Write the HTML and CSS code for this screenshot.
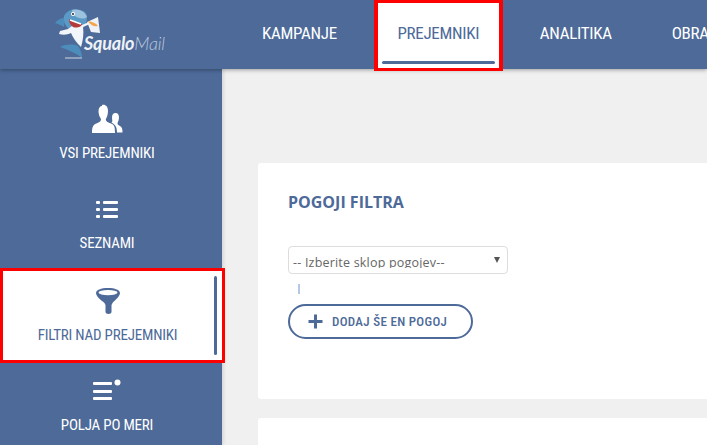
FILE: index.html
```html
<!DOCTYPE html>
<html lang="sl">
<head>
<meta charset="utf-8">
<title>SqualoMail</title>
<link rel="stylesheet" href="styles.css">
</head>
<body>
<header class="topbar">
  <div class="logo">
    <svg class="shark" viewBox="55 9 46 50" width="46" height="50" aria-hidden="true">
      <path d="M55 23 C58 19 62 18 65 18 L64 27 C61 25 58 24 55 23Z" fill="#4d8dbb"/>
      <path d="M64 16 C67 10 74 8 80 10 C85 11 87 14 87 17 C87 22 85 27 82 29 L80 40 L70 30 C66 27 63 22 64 16Z" fill="#5b9ac6"/>
      <path d="M72 10 C78 8 85 11 87 17 C83 20 78 18 75 16 C73 14 72 12 72 10Z" fill="#9cc2de"/>
      <path d="M68 29 L60 31 L59 34 C63 35 67 35 71 33 C73 38 76 42 81 47 C83 40 84 34 83 27 L90 24 L89 22 L82 25 L72 26Z" fill="#f2f5f9"/>
      <path d="M69 19 C73 22 78 24 82 24 C81 28 76 28 73 27 C70 25 69 22 69 19Z" fill="#b53a3a"/>
      <path d="M70 20 L81 24" stroke="#fff" stroke-width="1.500"/>
      <circle cx="73" cy="14" r="2" fill="#fff"/><circle cx="73" cy="14" r="1" fill="#223"/>
      <path d="M87 22 L98 17 L100 33 L91 32Z" fill="#eef1f5"/>
      <path d="M88 21 C92 22 96 23 98 26 C94 27 90 25 88 21Z" fill="#f2a64a"/>
      <path d="M60 47 C66 44 74 44 78 46 C81 50 82 54 82 58 C76 53 68 50 60 47Z" fill="#4d8dbb"/>
      <path d="M65 58 H82" stroke="#cfd8e4" stroke-width="1"/>
    </svg>
    <span class="logo-text"><b>Squalo</b><i>Mail</i></span>
  </div>
  <nav class="mainnav">
    <a class="navitem navitem-first">KAMPANJE</a>
    <a class="navitem is-active">PREJEMNIKI</a>
    <a class="navitem navitem-third">ANALITIKA</a>
    <a class="navitem">OBRAZCI</a>
  </nav>
</header>
<div class="body">
  <aside class="sidebar">
    <a class="sideitem sideitem-all">
      <svg class="ico" width="32" height="32" viewBox="0 0 32 32" aria-hidden="true"><path d="M11 2 C14 1 17 3 17 8 C17 12 15.500 15 14.800 16 C14.800 18 16 19 20 20.500 C23 21.700 24 23 24 30 H1 C1 24 2 21.700 6 20.300 C9 19 10 18 10 16 C8.500 14 7.500 11 7.500 8 C7.500 5 9 3 11 3Z" fill="#fff"/><path d="M24.500 10 C27 10 28 12 28 14.500 C28 17 27 19 26.500 20 C26.500 21.500 27 22 29 23 C31 24 31.500 26 31.500 29.500 H26 C26 25 25 22 20.500 19.500 C22 18.500 21 17 21 14.500 C21 12 22 10 24.500 10Z" fill="#fff"/></svg>
      <span>VSI PREJEMNIKI</span>
    </a>
    <a class="sideitem sideitem-lists">
      <svg class="ico" width="24" height="20" viewBox="0 0 24 20" aria-hidden="true"><g fill="#fff"><rect x="1" y="1" width="4" height="3" rx="1"/><rect x="1" y="8" width="4" height="3" rx="1"/><rect x="1" y="15" width="4" height="3" rx="1"/><rect x="8" y="1" width="15" height="3" rx="1"/><rect x="8" y="8" width="15" height="3" rx="1"/><rect x="8" y="15" width="15" height="3" rx="1"/></g></svg>
      <span>SEZNAMI</span>
    </a>
    <a class="sideitem is-active">
      <svg class="ico" width="26" height="28" viewBox="0 0 26 28" aria-hidden="true"><path d="M13 1 C20 1 25 3 25 6 C25 9.500 20 13 17.500 16 L16.500 18 V25 C16.500 27.500 10.500 27.500 10.500 25 V18 L9.500 16 C6 13 1 9.500 1 6 C1 3 6 1 13 1Z" fill="#4d6a99"/><ellipse cx="13" cy="5.600" rx="9.500" ry="2.600" fill="#fff"/></svg>
      <span>FILTRI NAD PREJEMNIKI</span>
    </a>
    <a class="sideitem sideitem-fields">
      <svg class="ico" width="30" height="24" viewBox="0 0 30 24" aria-hidden="true"><g fill="#fff"><rect x="1" y="3" width="19" height="3" rx="1"/><rect x="1" y="11" width="19" height="3" rx="1"/><rect x="1" y="18" width="19" height="3" rx="1"/><circle cx="25.500" cy="3.500" r="3"/></g></svg>
      <span>POLJA PO MERI</span>
    </a>
  </aside>
  <main class="content">
    <section class="card">
      <h2 class="card-title">POGOJI FILTRA</h2>
      <div class="select"><span class="select-value">-- Izberite sklop pogojev--</span><i class="caret"></i></div>
      <div class="cursor"></div>
      <button class="addbtn" type="button">
        <svg width="15" height="15" viewBox="0 0 15 15" aria-hidden="true"><path d="M6 0.500H9V6H14.500V9H9V14.500H6V9H0.500V6H6Z" fill="#4d6a99"/></svg>
        <span>DODAJ ŠE EN POGOJ</span>
      </button>
    </section>
    <section class="card card-next"></section>
  </main>
</div>
</body>
</html>
```

FILE: styles.css
```css
* { box-sizing: border-box; }

html, body {
  margin: 0;
  height: 445px;
  overflow: hidden;
}

body {
  font-family: "Roboto", "Liberation Sans", sans-serif;
  background: #f0f0f0;
  display: flex;
  flex-direction: column;
}

.topbar {
  flex: 0 0 69px;
  height: 69px;
  background: #4d6a99;
  display: flex;
  box-shadow: 0 1px 4px rgba(0, 0, 0, 0.35);
  position: relative;
  z-index: 2;
}

.logo {
  width: 222px;
  flex: none;
  display: flex;
  align-items: flex-start;
  padding: 9px 0 0 55px;
}

.shark { flex: none; }

.logo-text {
  margin: 24px 0 0 -17px;
  font-family: "Lato", sans-serif;
  font-size: 18px;
  line-height: 20px;
  color: #eef2f7;
  letter-spacing: -0.2px;
}

.logo-text b { font-weight: 700; font-style: italic; }
.logo-text i { font-weight: 300; color: #b9c7da; }

.mainnav {
  display: flex;
  align-items: flex-start;
  padding-left: 40px;
}

.navitem {
  display: block;
  flex: none;
  height: 69px;
  padding: 23px 0 0;
  font-size: 17px;
  font-stretch: 75%;
  letter-spacing: -0.3px;
  line-height: 20px;
  color: #fff;
  white-space: nowrap;
}

.navitem-first { margin-right: 37px; }
.navitem-third { margin-right: 60px; }

.navitem.is-active {
  position: relative;
  width: 129px;
  height: 71px;
  margin-right: 37px;
  padding: 20px 0 0;
  background: #fff;
  border-style: solid;
  border-color: #f00;
  border-width: 3px 4px;
  color: #4d6a99;
  text-align: center;
}

.navitem.is-active::after {
  content: "";
  position: absolute;
  left: 4px;
  right: 4px;
  bottom: 4px;
  height: 3px;
  border-radius: 2px;
  background: #4d6a99;
}

.body {
  flex: 1;
  display: flex;
  min-height: 0;
}

.sidebar {
  width: 222px;
  flex: none;
  background: #4d6a99;
  display: flex;
  flex-direction: column;
  padding-top: 34px;
  box-shadow: 1px 0 4px rgba(0, 0, 0, 0.15);
}

.sideitem {
  flex: none;
  display: flex;
  flex-direction: column;
  align-items: center;
  padding-right: 8px;
  color: #fff;
  font-size: 15px;
  font-stretch: 75%;
  letter-spacing: -0.2px;
  line-height: 18px;
  white-space: nowrap;
}

.sideitem-all { height: 96px; }
.sideitem-all .ico { margin-bottom: 9px; }

.sideitem-lists { height: 69px; padding-top: 1px; }
.sideitem-lists .ico { margin-bottom: 14px; }

.sideitem.is-active {
  position: relative;
  width: 225px;
  height: 95px;
  border: 3px solid #f00;
  background: #fff;
  color: #4d6a99;
  padding: 16px 10px 0 0;
}

.sideitem.is-active .ico { margin-bottom: 11px; }

.sideitem.is-active::after {
  content: "";
  position: absolute;
  right: 5px;
  top: 5px;
  bottom: 5px;
  width: 3px;
  border-radius: 2px;
  background: #4d6a99;
}

.sideitem-fields { padding-top: 16px; }
.sideitem-fields .ico { margin-bottom: 13px; }

.content {
  flex: 1;
  min-width: 0;
  padding: 94px 0 0 36px;
  display: flex;
  flex-direction: column;
  gap: 19px;
}

.card {
  flex: none;
  width: 700px;
  height: 236px;
  background: #fff;
  border-radius: 3px;
  padding: 30px 30px 0;
}

.card-title {
  margin: 0 0 35px;
  font-family: "Open Sans", sans-serif;
  font-size: 16px;
  line-height: 18px;
  font-weight: 700;
  color: #4d6a99;
}

.select {
  position: relative;
  width: 220px;
  height: 28px;
  border: 1px solid #ddd;
  border-radius: 4px;
  padding: 7px 0 0 4px;
  font-family: "Open Sans", sans-serif;
  font-size: 12.500px;
  line-height: 18px;
  color: #666;
  letter-spacing: 0.2px;
}

.select-value {
  display: block;
  height: 14px;
  overflow: hidden;
}

.caret {
  position: absolute;
  right: 7px;
  top: 10px;
  border-left: 3px solid transparent;
  border-right: 3px solid transparent;
  border-top: 6px solid #555;
}

.cursor {
  width: 2px;
  height: 10px;
  margin: 10px 0 0 10px;
  background: #b4c8e4;
}

.addbtn {
  display: flex;
  align-items: center;
  gap: 9px;
  width: 185px;
  height: 35px;
  margin-top: 10px;
  padding: 0 0 0 18px;
  background: #fff;
  border: 2px solid #4d6a99;
  border-radius: 18px;
  color: #4d6a99;
  font-family: "Roboto", sans-serif;
  font-size: 13px;
  font-stretch: 75%;
  letter-spacing: 0.3px;
  font-weight: 500;
  white-space: nowrap;
}

.card-next { height: 100px; }
```
